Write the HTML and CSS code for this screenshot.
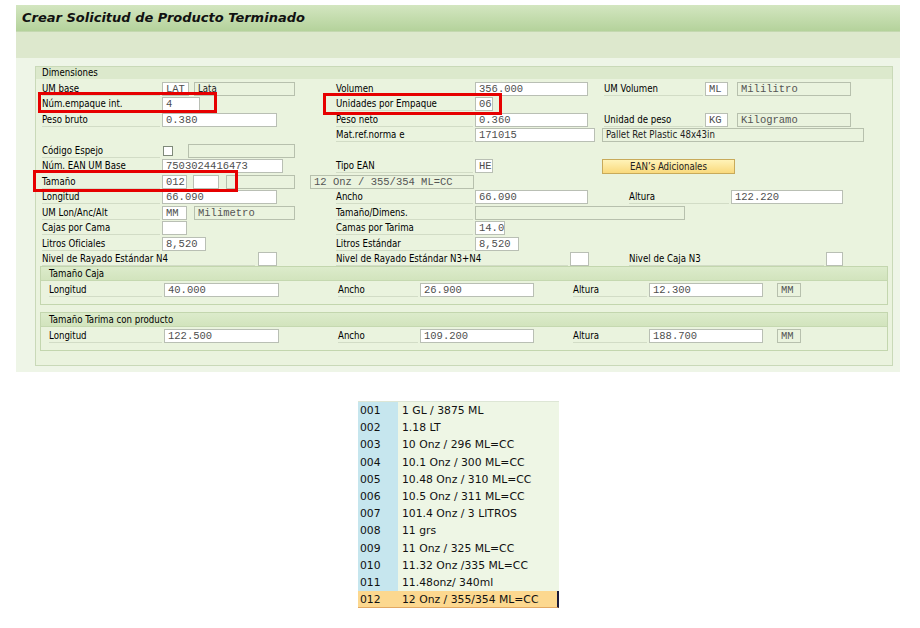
FILE: index.html
```html
<!DOCTYPE html>
<html lang="es">
<head>
<meta charset="utf-8">
<title>Crear Solicitud de Producto Terminado</title>
<link rel="stylesheet" href="styles.css">
</head>
<body>
<div class="screen">
  <div class="titlebar">Crear Solicitud de Producto Terminado</div>
  <div class="toolbar"></div>
  <div class="content">
    <div class="panel">
      <div class="panel-head">Dimensiones</div>
      <div class="rows">
        <div class="row">
          <div class="c1"><span class="lbl l1">UM base</span><span class="inp w27">LAT</span><span class="disp sans w101 g5">Lata</span></div>
          <div class="c2"><span class="lbl l2">Volumen</span><span class="inp w113">356.000</span></div>
          <div class="c3"><span class="lbl l3">UM Volumen</span><span class="inp w23">ML</span><span class="disp w114 g9">Mililitro</span></div>
        </div>
        <div class="row">
          <div class="c1"><span class="lbl l1">Núm.empaque int.</span><span class="inp w38">4</span></div>
          <div class="c2"><span class="lbl l2">Unidades por Empaque</span><span class="inp w18">06</span></div>
        </div>
        <div class="row">
          <div class="c1"><span class="lbl l1">Peso bruto</span><span class="inp w115">0.380</span></div>
          <div class="c2"><span class="lbl l2">Peso neto</span><span class="inp w113">0.360</span></div>
          <div class="c3"><span class="lbl l3">Unidad de peso</span><span class="inp w23">KG</span><span class="disp w114 g9">Kilogramo</span></div>
        </div>
        <div class="row">
          <div class="c1"></div>
          <div class="c2"><span class="lbl l2">Mat.ref.norma e</span><span class="inp w120">171015</span></div>
          <div class="c3 pull"><span class="disp sans w262">Pallet Ret Plastic 48x43in</span></div>
        </div>
        <div class="row">
          <div class="c1"><span class="lbl l1">Código Espejo</span><span class="chk"></span><span class="disp w107 g15"></span></div>
        </div>
        <div class="row">
          <div class="c1"><span class="lbl l1">Núm. EAN UM Base</span><span class="inp w121">7503024416473</span></div>
          <div class="c2"><span class="lbl l2">Tipo EAN</span><span class="inp w18">HE</span></div>
          <div class="c3 pull"><span class="btn">EAN’s Adicionales</span></div>
        </div>
        <div class="row">
          <div class="c1 wide"><span class="lbl l1">Tamaño</span><span class="inp w25">012</span><span class="inp w26 g6"></span><span class="disp w69 g7"></span><span class="disp w164 g15">12 Onz / 355/354 ML=CC</span></div>
        </div>
        <div class="row">
          <div class="c1"><span class="lbl l1">Longitud</span><span class="inp w115">66.090</span></div>
          <div class="c2"><span class="lbl l2">Ancho</span><span class="inp w113">66.090</span></div>
          <div class="c3"><span class="lbl l3b">Altura</span><span class="inp w112">122.220</span></div>
        </div>
        <div class="row">
          <div class="c1"><span class="lbl l1">UM Lon/Anc/Alt</span><span class="inp w25">MM</span><span class="disp w101 g7">Milimetro</span></div>
          <div class="c2 wide"><span class="lbl l2">Tamaño/Dimens.</span><span class="disp w210"></span></div>
        </div>
        <div class="row">
          <div class="c1"><span class="lbl l1">Cajas por Cama</span><span class="inp w25"></span></div>
          <div class="c2"><span class="lbl l2">Camas por Tarima</span><span class="inp w30">14.0</span></div>
        </div>
        <div class="row">
          <div class="c1"><span class="lbl l1">Litros Oficiales</span><span class="inp w44">8,520</span></div>
          <div class="c2"><span class="lbl l2">Litros Estándar</span><span class="inp w44">8,520</span></div>
        </div>
        <div class="row">
          <div class="c1"><span class="lbl l1x">Nivel de Rayado Estándar N4</span><span class="inp w19"></span></div>
          <div class="c2"><span class="lbl l2x">Nivel de Rayado Estándar N3+N4</span><span class="inp w19"></span></div>
          <div class="c3"><span class="lbl l3x">Nivel de Caja N3</span><span class="inp w17"></span></div>
        </div>
      </div>

      <div class="subpanel first">
        <div class="sub-head">Tamaño Caja</div>
        <div class="sub-body">
          <span class="lbl s1">Longitud</span><span class="inp w115">40.000</span>
          <span class="lbl s2">Ancho</span><span class="inp w114">26.900</span>
          <span class="lbl s3">Altura</span><span class="inp w114">12.300</span>
          <span class="disp w24 g14">MM</span>
        </div>
      </div>
      <div class="subpanel second">
        <div class="sub-head">Tamaño Tarima con producto</div>
        <div class="sub-body">
          <span class="lbl s1">Longitud</span><span class="inp w115">122.500</span>
          <span class="lbl s2">Ancho</span><span class="inp w114">109.200</span>
          <span class="lbl s3">Altura</span><span class="inp w114">188.700</span>
          <span class="disp w24 g14">MM</span>
        </div>
      </div>
    </div>
  </div>
  <div class="mark mark1"></div>
  <div class="mark mark2"></div>
  <div class="mark mark3"></div>
</div>

<div class="dropdown">
  <div class="dd-row"><span class="key">001</span><span class="val">1 GL / 3875 ML</span></div>
  <div class="dd-row"><span class="key">002</span><span class="val">1.18 LT</span></div>
  <div class="dd-row"><span class="key">003</span><span class="val">10 Onz / 296 ML=CC</span></div>
  <div class="dd-row"><span class="key">004</span><span class="val">10.1 Onz / 300 ML=CC</span></div>
  <div class="dd-row"><span class="key">005</span><span class="val">10.48 Onz / 310 ML=CC</span></div>
  <div class="dd-row"><span class="key">006</span><span class="val">10.5 Onz / 311 ML=CC</span></div>
  <div class="dd-row"><span class="key">007</span><span class="val">101.4 Onz / 3 LITROS</span></div>
  <div class="dd-row"><span class="key">008</span><span class="val">11 grs</span></div>
  <div class="dd-row"><span class="key">009</span><span class="val">11 Onz / 325 ML=CC</span></div>
  <div class="dd-row"><span class="key">010</span><span class="val">11.32 Onz /335 ML=CC</span></div>
  <div class="dd-row"><span class="key">011</span><span class="val">11.48onz/ 340ml</span></div>
  <div class="dd-row sel"><span class="key">012</span><span class="val">12 Onz / 355/354 ML=CC</span></div>
</div>
</body>
</html>
```

FILE: styles.css
```css
* { box-sizing: border-box; }
html, body { margin: 0; padding: 0; background: #ffffff; }
body {
  font-family: "DejaVu Sans Condensed", "DejaVu Sans", Verdana, sans-serif;
  font-stretch: condensed;
  font-size: 9.6px;
  color: #000;
}
.screen {
  position: relative;
  margin: 5px 0 0 16px;
  width: 884px;
}
.titlebar {
  height: 27px;
  padding: 5px 0 0 6px;
  background: linear-gradient(#d3e6c0, #b4d29b);
  font-family: "DejaVu Sans", Verdana, sans-serif;
  font-stretch: normal;
  font-weight: bold;
  font-style: italic;
  font-size: 13px;
  color: #111;
  border-bottom: 1px solid #c4d8b0;
}
.toolbar {
  height: 26px;
  background: #dde8cd;
}
.content {
  background: #eef5e7;
  padding: 8px 7px 6px 19px;
}
.panel {
  background: #eaf3de;
  border: 1px solid #c9d9b8;
  padding-bottom: 14px;
}
.panel-head {
  height: 12px;
  background: #dce9cc;
  padding-left: 6px;
  line-height: 12px;
}
.rows {
  padding: 2px 0 0 6px;
}
.row {
  display: flex;
  height: 15.5px;
  align-items: center;
}
.c1 { width: 294px; flex-shrink: 0; display: flex; align-items: center; height: 100%; }
.c2 { width: 268px; flex-shrink: 0; display: flex; align-items: center; height: 100%; }
.c3 { flex: 1; display: flex; align-items: center; height: 100%; }
.c3.pull { margin-left: -2px; }
.wide { width: auto; }

.lbl {
  display: block;
  flex-shrink: 0;
  height: 14px;
  line-height: 14px;
  border-bottom: 1px solid #d2dcc6;
  white-space: nowrap;
  overflow: visible;
}
.l1 { width: 118px; margin-right: 2px; }
.l1x { width: 213px; margin-right: 3px; }
.l2 { width: 137px; margin-right: 2px; }
.l2x { width: 232px; margin-right: 2px; }
.l3 { width: 99px; margin-right: 2px; }
.l3b { width: 100px; margin-left: 25px; margin-right: 2px; }
.l3x { width: 195px; margin-left: 25px; margin-right: 2px; }

.inp, .disp {
  display: block;
  flex-shrink: 0;
  height: 14px;
  line-height: 12px;
  padding: 0 3px;
  border: 1px solid #b9bfb4;
  font-family: "Liberation Mono", "Courier New", monospace;
  font-stretch: normal;
  font-size: 10.5px;
  color: #4e4e4e;
  white-space: nowrap;
  overflow: hidden;
}
.inp { background: #ffffff; }
.disp { background: transparent; border-color: #b7c0ad; color: #555; }
.disp.sans {
  font-family: "DejaVu Sans Condensed", "DejaVu Sans", Verdana, sans-serif;
  font-stretch: condensed;
  font-size: 9.6px;
  color: #222;
}

.chk {
  display: block;
  width: 10px; height: 10px;
  margin-left: 1px;
  background: #fff;
  border: 1px solid #7f8a7a;
}
.btn {
  display: block;
  width: 133px;
  height: 15px;
  line-height: 13px;
  text-align: center;
  background: linear-gradient(#fff3b8, #f9d97c);
  border: 1px solid #c8aa5a;
  color: #222;
}

.g5 { margin-left: 5px; }
.g6 { margin-left: 6px; }
.g7 { margin-left: 7px; }
.g9 { margin-left: 9px; }
.g14 { margin-left: 14px; }
.g15 { margin-left: 15px; }

.w17 { width: 17px; } .w18 { width: 18px; } .w19 { width: 19px; }
.w23 { width: 23px; } .w24 { width: 24px; } .w25 { width: 25px; }
.w26 { width: 26px; } .w27 { width: 27px; } .w30 { width: 30px; }
.w38 { width: 38px; } .w44 { width: 44px; } .w69 { width: 69px; }
.w101 { width: 101px; } .w107 { width: 107px; } .w112 { width: 112px; }
.w113 { width: 113px; } .w114 { width: 114px; } .w115 { width: 115px; }
.w120 { width: 120px; } .w121 { width: 121px; } .w164 { width: 164px; }
.w210 { width: 210px; } .w262 { width: 262px; }

.subpanel {
  margin: 0 4px 0 4px;
  border: 1px solid #c3d6ae;
  background: #eaf3de;
}
.subpanel.first { margin-top: -1px; }
.subpanel.second { margin-top: 7px; }
.sub-head {
  height: 14px;
  line-height: 13px;
  padding-left: 8px;
  background: linear-gradient(#dcebcb, #d2e4bd);
  border-bottom: 1px solid #c5d8b0;
}
.sub-body {
  display: flex;
  align-items: center;
  height: 23px;
  padding: 0 0 5px 8px;
}
.s1 { width: 113px; margin-right: 2px; }
.s2 { width: 80px; margin-left: 59px; margin-right: 2px; }
.s3 { width: 74px; margin-left: 39px; margin-right: 2px; }

.mark {
  position: absolute;
  border: 3px solid #e60000;
}
.mark1 { left: 22px; top: 87px; width: 179px; height: 21px; }
.mark2 { left: 307px; top: 88px; width: 179px; height: 22px; }
.mark3 { left: 17px; top: 165px; width: 205px; height: 22px; }

.dropdown {
  margin: 29px 0 0 358px;
  width: 201px;
  background: #eef6e5;
  border-top: 1px solid #dde6d5;
  font-family: "DejaVu Sans", Verdana, sans-serif;
  font-stretch: normal;
  font-size: 10.8px;
  color: #111;
}
.dd-row {
  display: flex;
  height: 17.2px;
  line-height: 17px;
}
.key {
  width: 40px;
  padding-left: 2px;
  background: #c6e6ee;
}
.val { padding-left: 4px; }
.dd-row.sel {
  background: #fcd88f;
  border-bottom: 1px solid #e2a862;
  border-right: 2px solid #1a1a3a;
}
.dd-row.sel .key { background: #fcd88f; }
```
